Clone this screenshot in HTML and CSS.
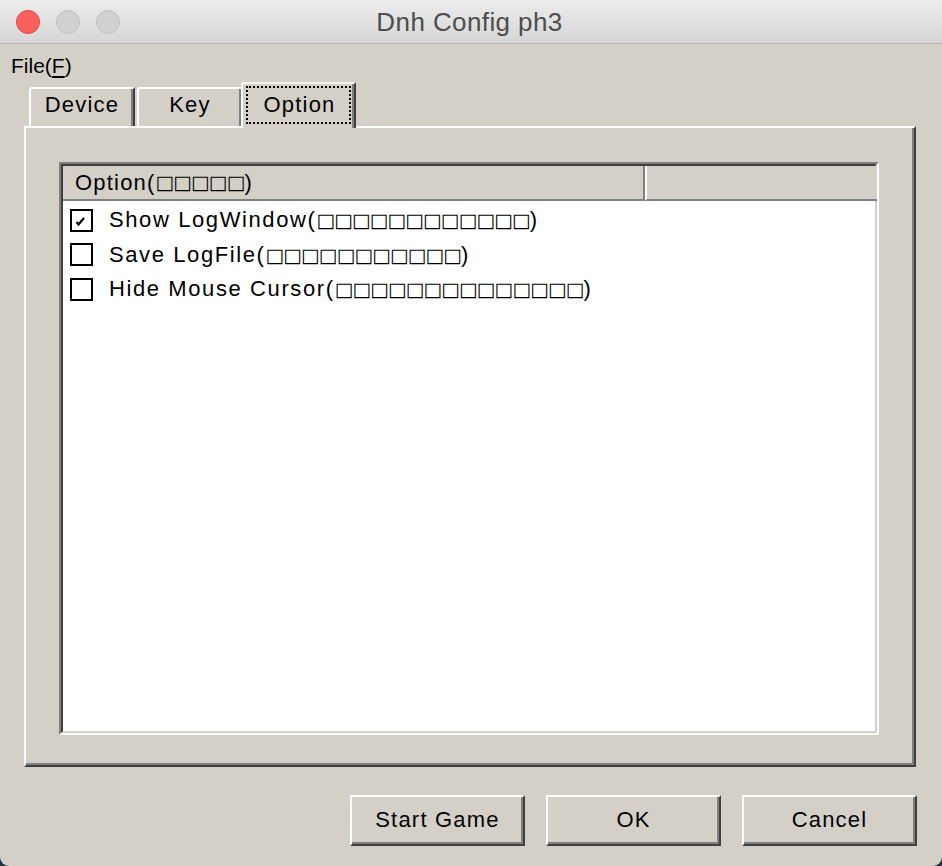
FILE: index.html
```html
<!DOCTYPE html>
<html lang="en">
<head>
<meta charset="utf-8">
<title>Dnh Config ph3</title>
<link rel="stylesheet" href="styles.css">
</head>
<body>
<div class="window">
  <div class="titlebar">
    <div class="lights">
      <span class="light close"></span>
      <span class="light"></span>
      <span class="light"></span>
    </div>
    <div class="title">Dnh Config ph3</div>
    <div></div>
  </div>
  <div class="menubar"><span class="menu">File(<u>F</u>)</span></div>
  <div class="content">
    <div class="tabs">
      <div class="tab tab-device">Device</div>
      <div class="tab tab-key">Key</div>
      <div class="tab tab-option active"><span class="focus">Option</span></div>
    </div>
    <div class="panel">
      <div class="lv">
        <div class="lv-inner">
          <div class="lv-header">
            <div class="col c1">Option(<span class="t">□□□□□</span>)</div>
            <div class="col c2"></div>
          </div>
          <div class="lv-body">
            <div class="row">
              <span class="cb"><svg viewBox="0 0 19 19" width="19" height="19"><polyline points="4.5,11 6.5,13.5 12,7" fill="none" stroke="#000" stroke-width="2.2"/></svg></span>
              <span class="label">Show LogWindow(<span class="t">□□□□□□□□□□□□</span>)</span>
            </div>
            <div class="row">
              <span class="cb"></span>
              <span class="label">Save LogFile(<span class="t">□□□□□□□□□□□</span>)</span>
            </div>
            <div class="row">
              <span class="cb"></span>
              <span class="label">Hide Mouse Cursor(<span class="t">□□□□□□□□□□□□□□</span>)</span>
            </div>
          </div>
        </div>
      </div>
    </div>
    <div class="buttons">
      <button class="btn">Start Game</button>
      <button class="btn">OK</button>
      <button class="btn">Cancel</button>
    </div>
  </div>
</div>
</body>
</html>
```

FILE: styles.css
```css
html, body {
  margin: 0;
  padding: 0;
}
body {
  background: #23323b;
  font-family: "Liberation Sans", Arial, sans-serif;
}
.window {
  width: 942px;
  height: 866px;
  background: #d4d0c8;
  border-radius: 0 0 9px 9px;
  overflow: hidden;
  display: flex;
  flex-direction: column;
}
.titlebar {
  height: 43px;
  flex: none;
  border-bottom: 1px solid #b3b3b3;
  background: linear-gradient(#ececec, #d6d6d6);
  display: grid;
  grid-template-columns: 1fr auto 1fr;
  align-items: center;
}
.lights {
  display: flex;
  gap: 16px;
  padding-left: 16px;
  padding-top: 1px;
}
.light {
  width: 22px;
  height: 22px;
  border-radius: 50%;
  background: #d1d1d1;
  border: 1px solid #c0c0c0;
}
.light.close {
  background: #fc605c;
  border-color: #e2463f;
}
.title {
  font-size: 26px;
  color: #4d4d4d;
  padding-top: 2px;
  letter-spacing: 0.4px;
  margin-left: -3px;
}
.menubar {
  height: 38px;
  box-sizing: border-box;
  padding: 10px 0 0 11px;
  font-size: 21px;
  color: #000;
  flex: none;
}
.menu u {
  text-underline-offset: 3px;
}
.content {
  flex: 1;
  display: flex;
  flex-direction: column;
  padding: 0 26px 0 24px;
  font-size: 22px;
  letter-spacing: 1.2px;
  color: #000;
}
.tabs {
  height: 44px;
  display: flex;
  align-items: flex-end;
  padding-left: 5px;
  position: relative;
  z-index: 2;
}
.tab {
  box-sizing: border-box;
  height: 39px;
  display: flex;
  align-items: center;
  justify-content: center;
  padding-bottom: 5px;
  background: #d4d0c8;
  border-top: 2px solid #fff;
  border-left: 2px solid #fff;
  border-right: 2px solid #404040;
  border-top-left-radius: 3px;
  box-shadow: inset -2px 0 0 #808080;
}
.tab-device {
  width: 106px;
  margin-right: 2px;
}
.tab-key {
  width: 106px;
}
.tab-option {
  width: 115px;
  margin-left: -2px;
  height: 46px;
  margin-bottom: -2px;
  padding: 2px 3px 4px 3px;
  align-items: stretch;
}
.focus {
  flex: 1;
  display: flex;
  align-items: center;
  justify-content: center;
  border: 2px dotted #000;
  padding-left: 2px;
}
.panel {
  box-sizing: border-box;
  width: 892px;
  height: 641px;
  flex: none;
  padding: 34px 35px 30px 33px;
  border-top: 2px solid #fff;
  border-left: 2px solid #fff;
  border-right: 2px solid #404040;
  border-bottom: 2px solid #404040;
  box-shadow: inset -2px -2px 0 #808080;
  position: relative;
  z-index: 1;
}
.lv {
  height: 100%;
  box-sizing: border-box;
  border-top: 2px solid #808080;
  border-left: 2px solid #808080;
  border-right: 2px solid #fff;
  border-bottom: 2px solid #fff;
}
.lv-inner {
  height: 100%;
  box-sizing: border-box;
  border-top: 2px solid #404040;
  border-left: 2px solid #404040;
  border-right: 2px solid #d4d0c8;
  border-bottom: 2px solid #d4d0c8;
  background: #fff;
  display: flex;
  flex-direction: column;
}
.lv-header {
  display: flex;
  height: 35px;
  flex: none;
  background: #d4d0c8;
}
.col {
  box-sizing: border-box;
  height: 35px;
  border-bottom: 2px solid #808080;
  display: flex;
  align-items: center;
}
.c1 {
  width: 582px;
  padding-left: 12px;
  border-right: 2px solid #808080;
}
.c2 {
  flex: 1;
  border-left: 2px solid #fff;
  margin-right: -2px;
}
.lv-body {
  padding-top: 2px;
}
.row {
  height: 34.5px;
  display: flex;
  align-items: center;
  padding-left: 7px;
  gap: 16px;
}
.label {
  letter-spacing: 1.6px;
}
.cb {
  box-sizing: border-box;
  width: 23px;
  height: 23px;
  border: 2px solid #000;
  background: #fff;
  display: flex;
  flex: none;
}
.cb svg {
  display: block;
}
.t {
  font-family: "DejaVu Sans", sans-serif;
  font-size: 19.5px;
  letter-spacing: -0.65px;
  line-height: 1;
}
.buttons {
  display: flex;
  justify-content: flex-end;
  gap: 21px;
  padding-top: 28px;
  margin-right: -1px;
}
.btn {
  box-sizing: border-box;
  width: 175px;
  height: 51px;
  background: #d4d0c8;
  font-family: "Liberation Sans", Arial, sans-serif;
  font-size: 22px;
  letter-spacing: 1.2px;
  color: #000;
  padding: 0 0 2px 0;
  border-top: 2px solid #fff;
  border-left: 2px solid #fff;
  border-right: 2px solid #404040;
  border-bottom: 2px solid #404040;
  box-shadow: inset -2px -2px 0 #808080;
  border-radius: 0;
}
```
